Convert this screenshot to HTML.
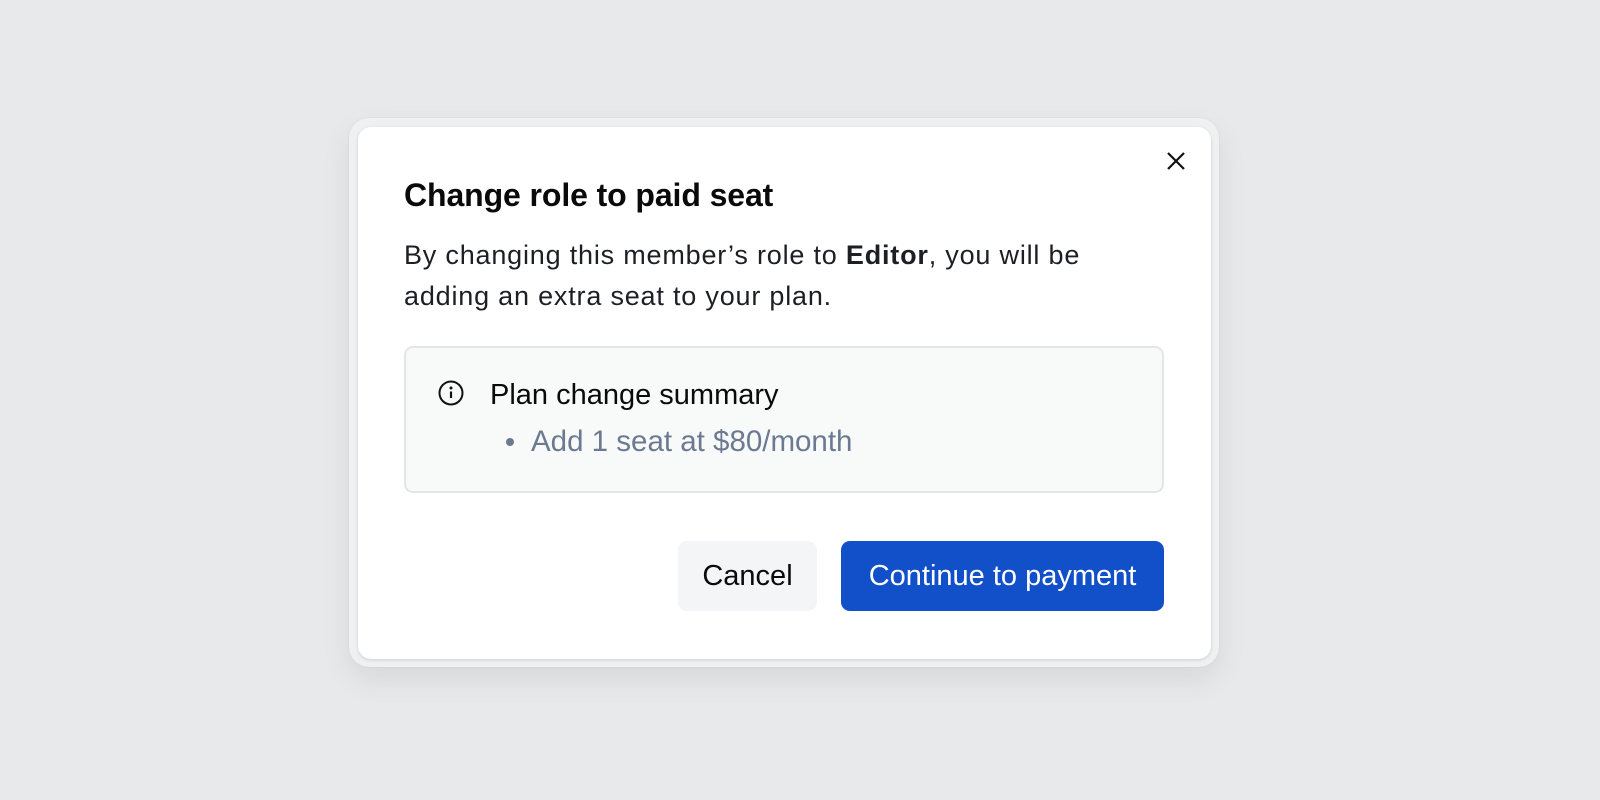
<!DOCTYPE html>
<html><head><meta charset="utf-8"><style>
*{box-sizing:border-box;margin:0;padding:0}
body{width:1600px;height:800px;background:#e8e9eb;font-family:"Liberation Sans",sans-serif;position:relative;overflow:hidden}
.outer{position:absolute;left:349px;top:118px;width:870px;height:549px;border-radius:20px;background:#eff0f1;box-shadow:0 12px 30px rgba(0,0,0,0.08),0 0 0 1px #e2e3e5}
.card{position:absolute;left:358px;top:127px;width:853px;height:532px;border-radius:13px;background:#fff;box-shadow:0 1px 3px rgba(0,0,0,0.15)}
.t{position:absolute;left:404px;top:179px;font-size:32px;line-height:32px;font-weight:bold;color:#0a0a0a;letter-spacing:-0.1px;white-space:nowrap}
.p{position:absolute;left:404px;top:235px;font-size:27px;line-height:41px;color:#1c1f24;width:700px;white-space:nowrap;letter-spacing:0.8px}
.box{position:absolute;left:404px;top:346px;width:760px;height:147px;background:#f8f9f9;border:2px solid #e3e5e7;border-radius:9px}
.h{position:absolute;left:490px;top:381px;font-size:29px;line-height:29px;color:#0a0a0a;white-space:nowrap}
.dot{position:absolute;left:506px;top:438px;width:8px;height:8px;border-radius:50%;background:#6b7a90}
.li{position:absolute;left:531px;top:427px;font-size:29.5px;line-height:30px;color:#6b7a90;white-space:nowrap}
.btn{position:absolute;top:541px;height:70px;border-radius:9px;font-size:29px;display:flex;align-items:center;justify-content:center;white-space:nowrap}
.c{left:678px;width:139px;background:#f4f5f6;color:#0a0a0a}
.g{left:841px;width:323px;background:#1150c9;color:#fff}
</style></head><body>
<div class="outer"></div>
<div class="card"></div>
<svg style="position:absolute;left:1160px;top:145px" width="32" height="32"><path d="M8 8L24 24M24 8L8 24" stroke="#111" stroke-width="2.2" fill="none"/></svg>
<div class="t">Change role to paid seat</div>
<div class="p">By changing this member’s role to <b>Editor</b>, you will be<br>adding an extra seat to your plan.</div>
<div class="box"></div>
<svg style="position:absolute;left:437px;top:379px" width="28" height="28"><circle cx="14" cy="14" r="11.5" stroke="#111" stroke-width="2" fill="none"/><circle cx="14" cy="9" r="1.5" fill="#111"/><path d="M14 12.5V19" stroke="#111" stroke-width="2.2"/></svg>
<div class="h">Plan change summary</div>
<div class="dot"></div>
<div class="li">Add 1 seat at $80/month</div>
<div class="btn c">Cancel</div>
<div class="btn g">Continue to payment</div>
</body></html>
